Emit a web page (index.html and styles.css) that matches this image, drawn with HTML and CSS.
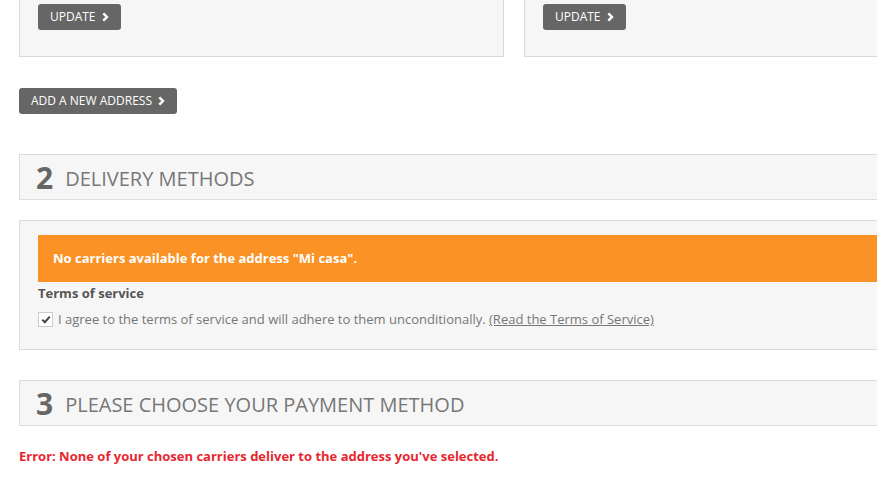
FILE: index.html
```html
<!DOCTYPE html>
<html>
<head>
<meta charset="utf-8">
<link rel="stylesheet" href="styles.css">
</head>
<body>
<div class="page">
  <div class="addresses">
    <div class="address-box">
      <button class="btn">UPDATE <svg class="chev" width="7" height="10" viewBox="0 0 7 10"><path d="M1.3 1.3 L5 5 L1.3 8.7" fill="none" stroke="#fff" stroke-width="2.4"/></svg></button>
    </div>
    <div class="address-box">
      <button class="btn">UPDATE <svg class="chev" width="7" height="10" viewBox="0 0 7 10"><path d="M1.3 1.3 L5 5 L1.3 8.7" fill="none" stroke="#fff" stroke-width="2.4"/></svg></button>
    </div>
  </div>

  <div class="add-row">
    <button class="btn">ADD A NEW ADDRESS <svg class="chev" width="7" height="10" viewBox="0 0 7 10"><path d="M1.3 1.3 L5 5 L1.3 8.7" fill="none" stroke="#fff" stroke-width="2.4"/></svg></button>
  </div>

  <h2 class="step-heading step-delivery"><span class="num">2</span>DELIVERY METHODS</h2>

  <div class="delivery-box">
    <p class="alert">No carriers available for the address "Mi casa".</p>
    <p class="tos-title">Terms of service</p>
    <div class="tos">
      <span class="check"><svg width="10" height="9" viewBox="0 0 10 9"><path d="M1.2 4.6 L3.8 7.2 L8.8 1.6" fill="none" stroke="#444" stroke-width="2"/></svg></span>
      <span class="tos-text">I agree to the terms of service and will adhere to them unconditionally. <a class="tos-link" href="#">(Read the Terms of Service)</a></span>
    </div>
  </div>

  <h2 class="step-heading step-payment"><span class="num">3</span>PLEASE CHOOSE YOUR PAYMENT METHOD</h2>

  <p class="error">Error: None of your chosen carriers deliver to the address you've selected.</p>
</div>
</body>
</html>
```

FILE: styles.css
```css
html, body {
  margin: 0;
  padding: 0;
  background: #fff;
  overflow: hidden;
}
body {
  font-family: "Open Sans", "Liberation Sans", sans-serif;
  font-size: 13px;
  color: #777;
}
.page {
  width: 1100px;
  padding-left: 19px;
}
.addresses {
  display: grid;
  grid-template-columns: 485px 485px;
  column-gap: 20px;
}
.address-box {
  background: #f6f6f6;
  border: 1px solid #d9d9d9;
  border-top: none;
  padding: 4px 18px 26px;
}
.btn {
  display: inline-flex;
  align-items: center;
  gap: 6px;
  height: 26px;
  padding: 0 12px;
  border: none;
  border-radius: 3px;
  background: #666;
  color: #fff;
  font-family: "Open Sans", "Liberation Sans", sans-serif;
  font-size: 12px;
  line-height: 26px;
  cursor: pointer;
}
.chev {
  display: block;
}
.add-row {
  margin-top: 31px;
}
.step-heading {
  margin: 0;
  box-sizing: content-box;
  background: #f6f6f6;
  border: 1px solid #ddd;
  display: flex;
  align-items: center;
  padding: 3px 0 0 16px;
  height: 41px;
  font-weight: 400;
  font-size: 20px;
  color: #777;
  line-height: 1;
}
.step-delivery {
  margin-top: 40px;
}
.step-payment {
  margin-top: 30px;
}
.step-heading .num {
  font-weight: 700;
  font-size: 30px;
  color: #666;
  margin-right: 12px;
  position: relative;
  top: -1px;
}
.delivery-box {
  margin-top: 20px;
  background: #f6f6f6;
  border: 1px solid #ddd;
  padding: 14px 0 21px 18px;
}
.alert {
  margin: 0;
  background: #fb9226;
  color: #fff;
  font-weight: 700;
  font-size: 13px;
  height: 47px;
  line-height: 47px;
  padding-left: 15px;
}
.tos-title {
  margin: 2px 0 0;
  font-weight: 700;
  color: #555;
  line-height: 18px;
}
.tos {
  display: flex;
  align-items: center;
  margin-top: 8px;
  line-height: 18px;
  color: #777;
}
.check {
  width: 13px;
  height: 13px;
  border: 1px solid #ccc;
  background: #fff;
  display: inline-flex;
  align-items: center;
  justify-content: center;
  margin-right: 5px;
}
.tos-link {
  color: #777;
  text-decoration: underline;
}
.error {
  margin: 21px 0 0;
  color: #e8262f;
  font-weight: 700;
  font-size: 13px;
}
```
